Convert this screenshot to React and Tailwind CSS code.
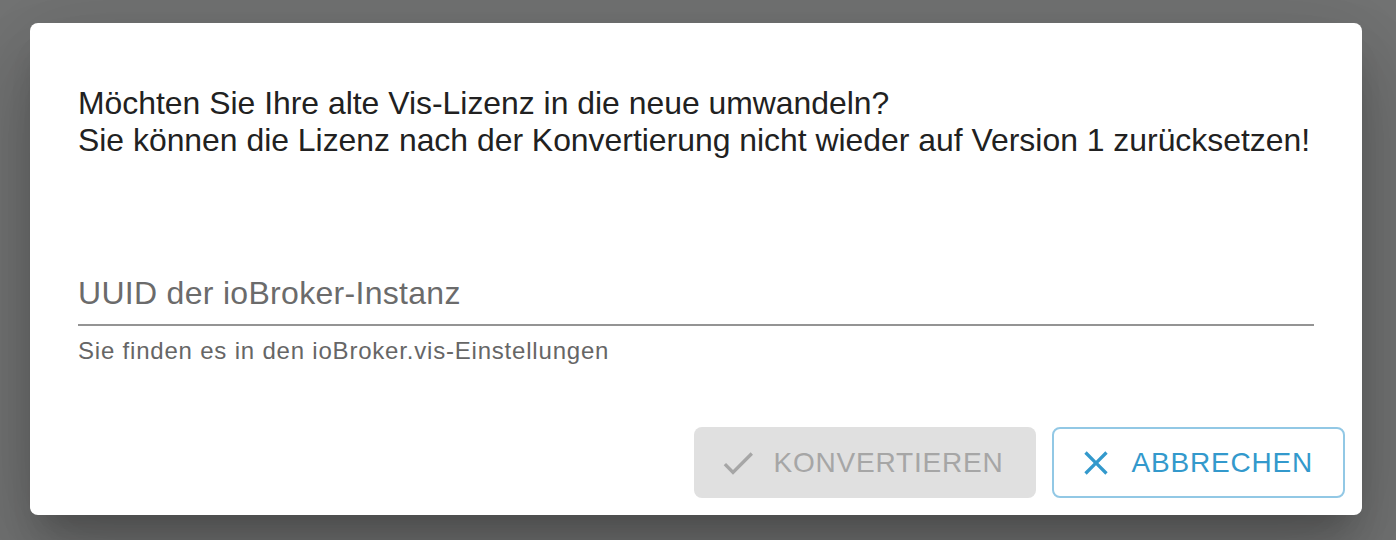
import React from "react";

function CheckIcon({ className }) {
  return (
    <svg viewBox="0 0 24 24" className={className} fill="currentColor">
      <path d="M9 16.17 4.83 12l-1.42 1.41L9 19 21 7l-1.41-1.41z" />
    </svg>
  );
}

function CloseIcon({ className }) {
  return (
    <svg viewBox="0 0 24 24" className={className} fill="currentColor">
      <path d="M19 6.41 17.59 5 12 10.59 6.41 5 5 6.41 10.59 12 5 17.59 6.41 19 12 13.41 17.59 19 19 17.59 13.41 12z" />
    </svg>
  );
}

export default function App() {
  return (
    <div className="h-[540px] w-full overflow-hidden bg-[#737474] pt-[23px] px-[30px] font-['Liberation_Sans',Arial,sans-serif]">
      {/* dialog */}
      <div className="flex h-[492px] w-[1332px] flex-col rounded-[8px] bg-white shadow-[0_22px_30px_-14px_rgba(0,0,0,0.2),0_48px_76px_6px_rgba(0,0,0,0.14),0_18px_92px_16px_rgba(0,0,0,0.12)]">
        <div className="flex-1 px-[48px] pt-[62px]">
          <div className="whitespace-nowrap text-[31.9px] leading-[37px] text-[#212121]">
            <div>Möchten Sie Ihre alte Vis-Lizenz in die neue umwandeln?</div>
            <div>Sie können die Lizenz nach der Konvertierung nicht wieder auf Version 1 zurücksetzen!</div>
          </div>

          {/* text field */}
          <div className="mt-[116px]">
            <div className="border-b-2 border-[#949494] pb-[12px]">
              <div className="text-[32px] leading-[37px] tracking-[0.3px] text-[#6b6b6b]">
                UUID der ioBroker-Instanz
              </div>
            </div>
            <div className="mt-[10px] text-[24px] leading-[30px] tracking-[0.8px] text-[#666666]">
              Sie finden es in den ioBroker.vis-Einstellungen
            </div>
          </div>
        </div>

        {/* actions */}
        <div className="flex justify-end gap-[16px] pb-[17px] pr-[17px]">
          <button
            disabled
            className="flex h-[71px] items-center rounded-[8px] bg-[#e0e0e0] pl-[32px] pr-[32px] text-[28px] uppercase tracking-[0.8px] text-[#a6a6a6]"
          >
            <CheckIcon className="ml-[-8px] mr-[16px] h-[40px] w-[40px]" />
            Konvertieren
          </button>
          <button className="flex h-[71px] items-center rounded-[8px] border-2 border-[#92c8e5] bg-white pl-[30px] pr-[30px] text-[28px] uppercase tracking-[0.8px] text-[#3399cc]">
            <CloseIcon className="ml-[-8px] mr-[16px] h-[40px] w-[40px]" />
            Abbrechen
          </button>
        </div>
      </div>
    </div>
  );
}
